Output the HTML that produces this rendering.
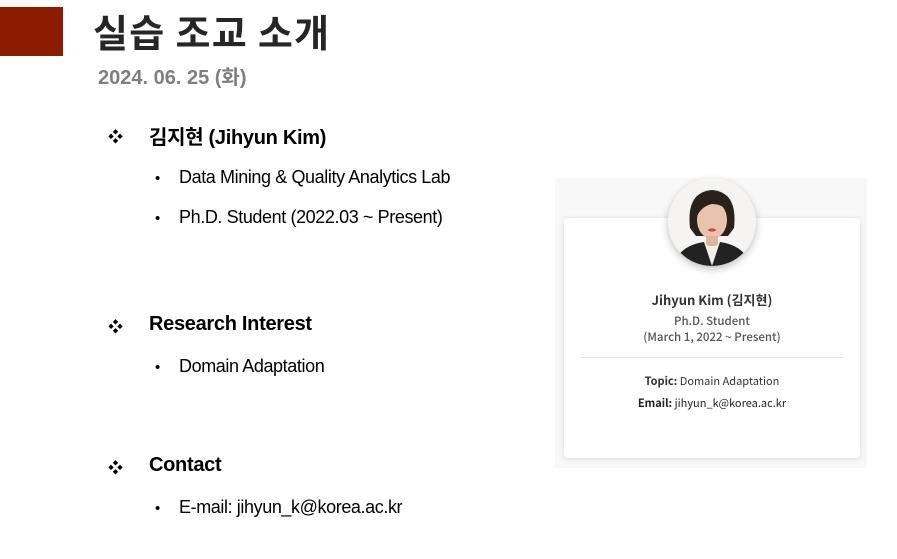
<!DOCTYPE html>
<html><head><meta charset="utf-8"><style>
body{margin:0;width:897px;height:559px;background:#fff;position:relative;overflow:hidden;font-family:"Liberation Sans","Noto Sans CJK KR",sans-serif;color:#000}
.a{position:absolute;white-space:nowrap}
.red{left:0;top:7px;width:63px;height:49px;background:#8b1c00}
h1{position:absolute;margin:0;left:93px;top:3px;font-size:38px;font-weight:bold;color:#262626;font-family:"Noto Sans CJK KR",sans-serif;letter-spacing:1.3px}
.date{left:98px;top:61px;font-size:20px;font-weight:bold;color:#7f7f7f;letter-spacing:0px}
.h{font-size:20px;font-weight:bold;letter-spacing:-0.3px}
.d{font-size:18px;letter-spacing:-0.4px}
.bul{font-size:15px}
.dia{font-size:15px}
.bg{left:555px;top:178px;width:312px;height:290px;background:#f8f8f8}
.card{left:564px;top:218px;width:296px;height:240px;background:#fff;border-radius:4px;box-shadow:0 1px 6px rgba(0,0,0,.12)}
.ph{left:668px;top:178px;width:88px;height:88px;border-radius:50%;background:#f6f4f2;box-shadow:0 3px 8px rgba(0,0,0,.25);overflow:hidden}
.c{width:296px;left:564px;text-align:center;font-family:"Noto Sans CJK KR",sans-serif}
</style></head><body>
<div class="a red"></div>
<h1>실습 조교 소개</h1>
<div class="a date">2024. 06. 25 (화)</div>

<div class="a dia" style="left:108px;top:126px">❖</div>
<div class="a h" style="left:149px;top:121px">김지현 (Jihyun Kim)</div>
<div class="a bul" style="left:155px;top:170px">•</div>
<div class="a d" style="left:179px;top:167px">Data Mining &amp; Quality Analytics Lab</div>
<div class="a bul" style="left:155px;top:210px">•</div>
<div class="a d" style="left:179px;top:207px">Ph.D. Student (2022.03 ~ Present)</div>

<div class="a dia" style="left:108px;top:316px">❖</div>
<div class="a h" style="left:149px;top:313px">Research Interest</div>
<div class="a bul" style="left:155px;top:359px">•</div>
<div class="a d" style="left:179px;top:356px">Domain Adaptation</div>

<div class="a dia" style="left:108px;top:457px">❖</div>
<div class="a h" style="left:149px;top:454px">Contact</div>
<div class="a bul" style="left:155px;top:500px">•</div>
<div class="a d" style="left:179px;top:497px">E-mail: jihyun_k@korea.ac.kr</div>

<div class="a bg"></div>
<div class="a card"></div>
<div class="a ph">
<svg width="88" height="88" viewBox="0 0 88 88">
<rect width="88" height="88" fill="#f6f4f2"/>
<path d="M22 50 Q18 14 44 12 Q70 14 66 50 L60 58 L28 58Z" fill="#2a211c"/>
<ellipse cx="44" cy="42" rx="15" ry="19" fill="#eac3ad"/>
<path d="M29 38 Q32 20 46 22 Q58 24 60 38 Q58 26 44 26 Q34 28 29 38Z" fill="#2a211c"/>
<rect x="38" y="58" width="12" height="10" fill="#e2b49c"/>
<path d="M6 88 Q10 68 36 64 L44 76 L52 64 Q78 68 82 88Z" fill="#222"/>
<path d="M36 64 L44 88 L52 64 L44 72Z" fill="#f2efe8"/>
<ellipse cx="44" cy="52" rx="4" ry="1.6" fill="#d44"/>
</svg></div>
<div class="a c" style="top:290px;font-size:13px;font-weight:bold;color:#333">Jihyun Kim (김지현)</div>
<div class="a c" style="top:313px;font-size:11.5px;color:#555;line-height:16px;font-weight:500">Ph.D. Student<br>(March 1, 2022 ~ Present)</div>
<div class="a" style="left:580px;top:357px;width:264px;height:1px;background:#e3e3e3"></div>
<div class="a c" style="top:373px;font-size:11px;color:#333"><b>Topic:</b> Domain Adaptation</div>
<div class="a c" style="top:395px;font-size:11px;color:#222"><b>Email:</b> jihyun_k@korea.ac.kr</div>
</body></html>
